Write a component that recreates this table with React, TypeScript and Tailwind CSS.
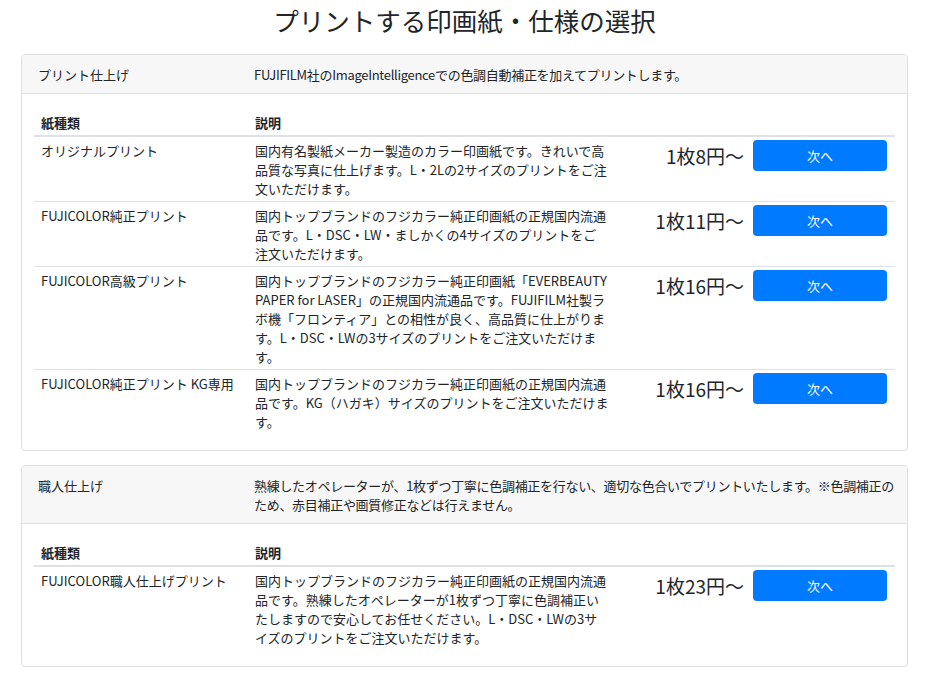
import React from "react";

type Paper = {
  name: string;
  desc: string[];
  price: string;
};

type Section = {
  title: string;
  note: string[];
  papers: Paper[];
};

// lines are broken by hand so the wrap matches the original
const sections: Section[] = [
  {
    title: "プリント仕上げ",
    note: ["FUJIFILM社のImageIntelligenceでの色調自動補正を加えてプリントします。"],
    papers: [
      {
        name: "オリジナルプリント",
        desc: [
          "国内有名製紙メーカー製造のカラー印画紙です。きれいで高",
          "品質な写真に仕上げます。L・2Lの2サイズのプリントをご注",
          "文いただけます。",
        ],
        price: "1枚8円〜",
      },
      {
        name: "FUJICOLOR純正プリント",
        desc: [
          "国内トップブランドのフジカラー純正印画紙の正規国内流通",
          "品です。L・DSC・LW・ましかくの4サイズのプリントをご",
          "注文いただけます。",
        ],
        price: "1枚11円〜",
      },
      {
        name: "FUJICOLOR高級プリント",
        desc: [
          "国内トップブランドのフジカラー純正印画紙「EVERBEAUTY",
          "PAPER for LASER」の正規国内流通品です。FUJIFILM社製ラ",
          "ボ機「フロンティア」との相性が良く、高品質に仕上がりま",
          "す。L・DSC・LWの3サイズのプリントをご注文いただけま",
          "す。",
        ],
        price: "1枚16円〜",
      },
      {
        name: "FUJICOLOR純正プリント KG専用",
        desc: [
          "国内トップブランドのフジカラー純正印画紙の正規国内流通",
          "品です。KG（ハガキ）サイズのプリントをご注文いただけま",
          "す。",
        ],
        price: "1枚16円〜",
      },
    ],
  },
  {
    title: "職人仕上げ",
    note: [
      "熟練したオペレーターが、1枚ずつ丁寧に色調補正を行ない、適切な色合いでプリントいたします。※色調補正の",
      "ため、赤目補正や画質修正などは行えません。",
    ],
    papers: [
      {
        name: "FUJICOLOR職人仕上げプリント",
        desc: [
          "国内トップブランドのフジカラー純正印画紙の正規国内流通",
          "品です。熟練したオペレーターが1枚ずつ丁寧に色調補正い",
          "たしますので安心してお任せください。L・DSC・LWの3サ",
          "イズのプリントをご注文いただけます。",
        ],
        price: "1枚23円〜",
      },
    ],
  },
];

function Lines({ lines }: { lines: string[] }) {
  return (
    <>
      {lines.map((l, i) => (
        <div key={i} className="whitespace-nowrap">
          {l}
        </div>
      ))}
    </>
  );
}

function SectionCard({ section }: { section: Section }) {
  return (
    <div className="border border-[#dfdfdf] rounded-[4px] bg-white overflow-hidden">
      {/* card header */}
      <div className="grid grid-cols-[216px_1fr] bg-[#f7f7f7] border-b border-[#dfdfdf] pl-4 pr-3 py-[9.5px]">
        <div>{section.title}</div>
        <div className="tracking-[-0.3px]">
          <Lines lines={section.note} />
        </div>
      </div>

      {/* card body */}
      <div className="px-3 pt-[15px] pb-[16px]">
        <div className="grid grid-cols-[214px_366px_1fr_150px] border-b-2 border-[#dee2e6] font-bold">
          <div className="px-[7px] py-[3.5px]">紙種類</div>
          <div className="px-[7px] py-[3.5px]">説明</div>
          <div></div>
          <div></div>
        </div>
        {section.papers.map((p, i) => (
          <div
            key={p.name}
            className={`grid grid-cols-[214px_366px_1fr_150px] ${i > 0 ? "border-t border-[#dee2e6]" : ""}`}
          >
            <div className="px-[7px] py-[3.5px] whitespace-nowrap">{p.name}</div>
            <div className="px-[7px] py-[3.5px]">
              <Lines lines={p.desc} />
            </div>
            <div className="pr-[1px] pt-[3px] text-right text-[19px] leading-[31px] whitespace-nowrap">
              {p.price}
            </div>
            <div className="px-[8px] pt-[3px]">
              <button className="w-[134px] h-[31px] rounded-[4px] bg-[#007bff] text-white text-[13px]">
                次へ
              </button>
            </div>
          </div>
        ))}
      </div>
    </div>
  );
}

export default function App() {
  return (
    <div
      className="min-h-[678px] bg-white text-[#212529] text-[13px] leading-[19px]"
      style={{ fontFamily: '"Noto Sans CJK JP", "Noto Sans", sans-serif' }}
    >
      <div className="ml-[21px] w-[887px] pt-[4px]">
        <h1 className="text-center text-[25.5px] leading-[31px] mb-[19px] font-normal">
          プリントする印画紙・仕様の選択
        </h1>
        <div className="flex flex-col gap-[14px]">
          {sections.map((s) => (
            <SectionCard key={s.title} section={s} />
          ))}
        </div>
      </div>
    </div>
  );
}
